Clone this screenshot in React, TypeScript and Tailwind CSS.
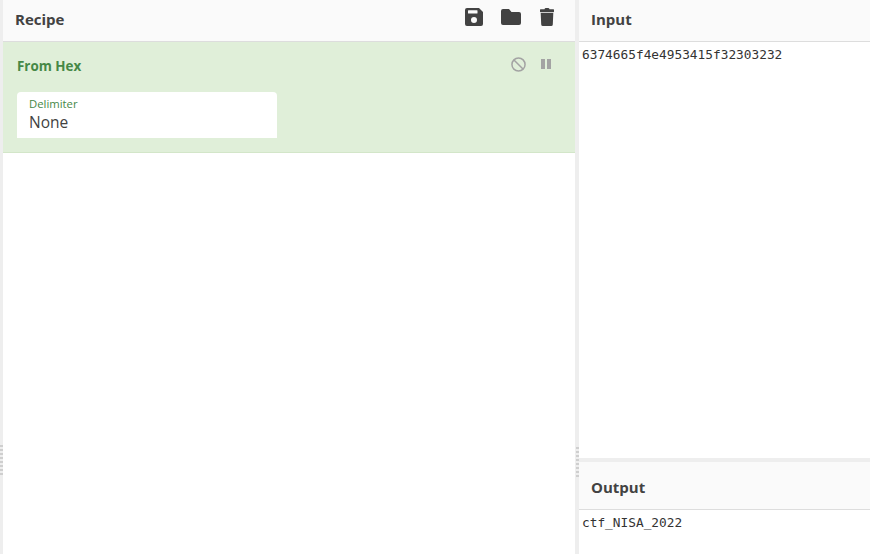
import React from "react";

const Save = () => (
  <svg viewBox="0 0 18 18" className="w-[18px] h-[18px]" fill="#424242" fillRule="evenodd"><path d="M2 0H14L18 4V16A2 2 0 0 1 16 18H2A2 2 0 0 1 0 16V2A2 2 0 0 1 2 0ZM3.500 2.200A.5.5 0 0 0 3 2.700V5A.5.5 0 0 0 3.500 5.500H12A.5.5 0 0 0 12.500 5V2.700A.5.5 0 0 0 12 2.200ZM9 9A3 3 0 1 0 9 15A3 3 0 1 0 9 9Z"/></svg>
);
const Folder = () => (
  <svg viewBox="0 0 20 16" className="w-[20px] h-[16px]" fill="#424242"><path d="M18 3H10.500L8 0H2A2 2 0 0 0 0 2V14A2 2 0 0 0 2 16H18A2 2 0 0 0 20 14V5A2 2 0 0 0 18 3Z"/></svg>
);
const Trash = () => (
  <svg viewBox="0 0 15 18" className="w-[15px] h-[18px]" fill="#424242"><path d="M14.400 1.200H10.500L10.200 .5A1 1 0 0 0 9.300 0H6.700A1 1 0 0 0 5.800 .5L5.500 1.200H1.600A.6.6 0 0 0 1 1.800V3.600A.6.6 0 0 0 1.600 4.200H14.400A.6.6 0 0 0 15 3.600V1.800A.6.6 0 0 0 14.400 1.200ZM2.200 16.400A1.700 1.700 0 0 0 3.900 18H12.100A1.700 1.700 0 0 0 13.800 16.400L14.300 5H1.700Z"/></svg>
);
const Ban = () => (
  <svg viewBox="0 0 16 16" className="w-[15px] h-[15px]" fill="none" stroke="#a3a3a3" strokeWidth="1.600"><circle cx="8" cy="8" r="7"/><path d="M3.200 3.200l9.600 9.600"/></svg>
);
const Pause = () => (
  <div className="flex gap-[2px]">
    <div className="w-[4px] h-[10px] bg-[#a3a3a3]" />
    <div className="w-[4px] h-[10px] bg-[#a3a3a3]" />
  </div>
);
const Dots = () => (
  <div className="flex flex-col gap-[2px] w-[3px]">
    {Array.from({ length: 8 }).map((_, i) => (
      <div key={i} className="w-[3px] h-[2px] bg-[#cfcfcf]" />
    ))}
  </div>
);

export default function App() {
  return (
    <div className="flex h-[554px] w-[870px] overflow-hidden bg-white text-[#424242] font-['Open_Sans',sans-serif]">
      <div className="w-[3px] bg-[#eeeeee] flex items-center pt-[365px] shrink-0"><Dots /></div>
      <div className="w-[572px] shrink-0 flex flex-col">
        <div className="h-[42px] shrink-0 bg-[#fafafa] border-b border-[#dddddd] flex items-center justify-between pl-[12px] pr-[21px]">
          <span className="text-[15px] font-bold mt-[-2px]">Recipe</span>
          <div className="flex items-center gap-[18px] mt-[-7px]">
            <Save /><Folder /><Trash />
          </div>
        </div>
        <div className="h-[111px] shrink-0 bg-[#e0efd9] border-b border-[#d3e6c9] pl-[14px] pr-[24px] pt-[16px]">
          <div className="flex items-center justify-between h-[18px]">
            <span className="text-[13.400px] font-bold text-[#468847] mt-[-2px]">From Hex</span>
            <div className="flex items-center gap-[15px] mt-[-6px]"><Ban /><Pause /></div>
          </div>
          <div className="mt-[16px] w-[260px] h-[46px] bg-white rounded-t-[4px] pl-[12px] pt-[4px]">
            <div className="text-[11.300px] leading-[16px] text-[#468847]">Delimiter</div>
            <div className="text-[15.500px] leading-[20px]">None</div>
          </div>
        </div>
        <div className="flex-1" />
      </div>
      <div className="w-[4px] bg-[#eeeeee] shrink-0 flex pt-[447px] justify-center"><Dots /></div>
      <div className="flex-1 flex flex-col min-w-0">
        <div className="h-[42px] shrink-0 bg-[#fafafa] border-b border-[#dddddd] flex items-center pl-[12px]">
          <span className="text-[15px] font-bold mt-[-2px]">Input</span>
        </div>
        <div className="h-[416px] shrink-0 pl-[3px] pt-[4px] font-['DejaVu_Sans_Mono',monospace] text-[12.800px] leading-[18px] text-[#333333]">6374665f4e4953415f32303232</div>
        <div className="h-[4px] shrink-0 bg-[#eeeeee]" />
        <div className="h-[48px] shrink-0 bg-[#fafafa] border-b border-[#dddddd] flex items-center pl-[12px]">
          <span className="text-[15px] font-bold mt-[4px]">Output</span>
        </div>
        <div className="pl-[3px] pt-[4px] font-['DejaVu_Sans_Mono',monospace] text-[12.800px] leading-[18px] text-[#333333]">ctf_NISA_2022</div>
      </div>
    </div>
  );
}
